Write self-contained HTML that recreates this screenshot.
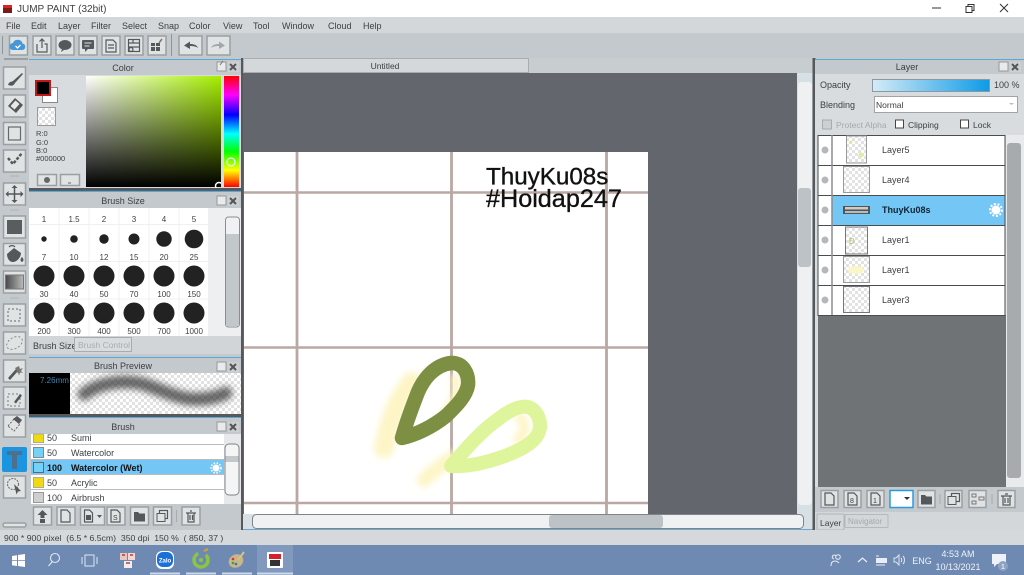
<!DOCTYPE html>
<html><head><meta charset="utf-8"><title>JUMP PAINT</title>
<style>html,body{margin:0;padding:0;background:#d3d7d9;overflow:hidden}svg{display:block;filter:blur(.3px)}
text{font-family:"Liberation Sans",sans-serif;font-size:9px;fill:#3c3f42}
.b{fill:#e0e3e4;stroke:#9b9fa2;stroke-width:1.5}
.d{fill:#55585b}.l{stroke:#55585b;fill:none;stroke-width:1.2}
.c{text-anchor:middle}.s{font-size:8px}</style></head><body>
<svg width="1024" height="575" viewBox="0 0 1024 575" xmlns="http://www.w3.org/2000/svg">
<defs>
<pattern id="ch" width="8" height="8" patternUnits="userSpaceOnUse"><rect width="8" height="8" fill="#fff"/><rect width="4" height="4" fill="#e6e6e6"/><rect x="4" y="4" width="4" height="4" fill="#e6e6e6"/></pattern>
<pattern id="ch2" width="6" height="6" patternUnits="userSpaceOnUse"><rect width="6" height="6" fill="#fff"/><rect width="3" height="3" fill="#e2e2e2"/><rect x="3" y="3" width="3" height="3" fill="#e2e2e2"/></pattern>
<linearGradient id="gh"><stop offset="0" stop-color="#fff"/><stop offset="1" stop-color="#a6ee00"/></linearGradient>
<linearGradient id="gv" x2="0" y2="1"><stop offset="0" stop-color="#000" stop-opacity="0"/><stop offset="1" stop-color="#000"/></linearGradient>
<linearGradient id="hue" x2="0" y2="1"><stop offset="0" stop-color="#f00"/><stop offset=".17" stop-color="#f0f"/><stop offset=".35" stop-color="#00f"/><stop offset=".52" stop-color="#0ff"/><stop offset=".68" stop-color="#0f0"/><stop offset=".85" stop-color="#ff0"/><stop offset="1" stop-color="#f00"/></linearGradient>
<linearGradient id="op"><stop offset="0" stop-color="#d5ebf7"/><stop offset="1" stop-color="#0d9be6"/></linearGradient>
<linearGradient id="gr"><stop offset="0" stop-color="#4a4a4a"/><stop offset="1" stop-color="#bbb"/></linearGradient>
<filter id="bl" filterUnits="userSpaceOnUse" x="340" y="340" width="240" height="170"><feGaussianBlur stdDeviation="3.500"/></filter>
<filter id="bs" filterUnits="userSpaceOnUse" x="60" y="360" width="200" height="60"><feGaussianBlur stdDeviation="3.500"/></filter>
</defs>

<!-- base -->
<rect width="1024" height="575" fill="#c3c9cd"/>
<rect width="1024" height="17" fill="#fff"/>
<rect y="17" width="1024" height="16" fill="#d3d7d9"/>
<rect y="33" width="1024" height="25" fill="#c3c9cd"/>
<rect x="3" y="5" width="9" height="8" fill="#7a1a1a"/><rect x="3" y="5" width="9" height="3" fill="#d22"/>
<text x="17" y="12" style="font-size:10px" fill="#222">JUMP PAINT (32bit)</text>
<path d="M932 8h9" stroke="#333"/><path d="M966 6.500h6v6h-6zM968 6.500v-2h6v6h-2" fill="none" stroke="#333"/><path d="M1000 4l8 8M1008 4l-8 8" stroke="#333"/>

<g style="fill:#444">
<text x="6" y="29">File</text><text x="31" y="29">Edit</text><text x="58" y="29">Layer</text><text x="91" y="29">Filter</text><text x="122" y="29">Select</text><text x="158" y="29">Snap</text><text x="189" y="29">Color</text><text x="223" y="29">View</text><text x="253" y="29">Tool</text><text x="282" y="29">Window</text><text x="328" y="29">Cloud</text><text x="363" y="29">Help</text>
</g>

<!-- top toolbar -->
<path d="M2.500 36v18" stroke="#8f9498"/>
<rect class="b" x="9.500" y="36" width="18" height="19"/>
<rect class="b" x="33" y="36" width="18" height="19"/>
<rect class="b" x="56" y="36" width="18" height="19"/>
<rect class="b" x="79" y="36" width="18" height="19"/>
<rect class="b" x="102" y="36" width="18" height="19"/>
<rect class="b" x="125" y="36" width="18" height="19"/>
<rect class="b" x="148" y="36" width="18" height="19"/>
<path d="M171.500 34v22" stroke="#8f9498"/>
<rect class="b" x="179" y="36" width="23" height="19"/>
<rect class="b" x="207" y="36" width="23" height="19"/>
<path d="M13 50a3.500 3.500 0 0 1 0-7 5 5 0 0 1 9.500 0.500 3.300 3.300 0 0 1 0 6.500z" fill="#4a97d8"/><path d="M15.500 46l2 2 3-3" stroke="#fff" fill="none" stroke-width="1.300"/>
<path d="M37 44v8h10v-8h-2.500M42 48v-9M39.500 41.500l2.500-2.500 2.500 2.500" class="l"/>
<ellipse cx="65" cy="45" rx="6.500" ry="5" class="d"/><path d="M62 49l-1 3 3-2z" class="d"/>
<rect x="82" y="40" width="12" height="9" rx="1" class="d"/><path d="M85 49v3l3-3z" class="d"/><path d="M84.500 43h7M84.500 46h5" stroke="#e0e3e4"/>
<path d="M106 40h7l3 3v9h-10zM108 45h6M108 48h6" class="l"/>
<rect x="128.500" y="39.500" width="11" height="12" class="l"/><path d="M128.500 43h11M128.500 47h11M133 39.500v3.500" class="l"/><circle cx="131" cy="49.500" r="2" class="l"/>
<path d="M151 43h4v3h-4zM156 43h4v3h-4zM151 47h4v4h-4zM156 47h4v4h-4z" class="d"/><path d="M159 43l3-4" stroke="#777" stroke-width="1.500"/>
<path d="M184 45.500l6-4v2.500c4 0 7 1 8 4-2-1.500-4-2-8-2v3z" fill="#55585b"/>
<path d="M225 45.500l-6-4v2.500c-4 0-7 1-8 4 2-1.500 4-2 8-2v3z" fill="#a3a7aa"/>

<!-- left toolbar -->
<rect x="0" y="58" width="29" height="472" fill="#c3c9cd"/>
<path d="M4 59h24" stroke="#777"/>
<g>
<rect class="b" x="3.500" y="67" width="22" height="22"/>
<rect class="b" x="3.500" y="95" width="22" height="22"/>
<rect class="b" x="3.500" y="122.500" width="22" height="22"/>
<rect class="b" x="3.500" y="150" width="22" height="22"/>
<rect class="b" x="3.500" y="183" width="22" height="22"/>
<rect class="b" x="3.500" y="216" width="22" height="22"/>
<rect class="b" x="3.500" y="243.500" width="22" height="22"/>
<rect class="b" x="3.500" y="271" width="22" height="22"/>
<rect class="b" x="3.500" y="304" width="22" height="22"/>
<rect class="b" x="3.500" y="332" width="22" height="22"/>
<rect class="b" x="3.500" y="360" width="22" height="22"/>
<rect class="b" x="3.500" y="387" width="22" height="22"/>
<rect class="b" x="3.500" y="415" width="22" height="22"/>
<rect x="2" y="447" width="25" height="25" rx="2" fill="#1b95e0"/>
<rect class="b" x="3.500" y="476" width="22" height="22"/>
<rect class="b" x="3" y="523" width="23" height="4" rx="2"/>
</g>
<path d="M8 85c1-4 4-3 5-4l9-8 1 1-8 9c-1 1-1 4-7 2z" class="d"/>
<path d="M15 98l8 7-7 8-8-7z" class="d"/><path d="M10.500 106l5-5.500 4 3.500-5 5.500z" fill="#e8e8e8"/>
<rect x="8.500" y="127" width="12" height="13" fill="none" stroke="#66696c" stroke-width="1.200"/>
<path d="M8 158l5 6 9-11" stroke="#55585b" stroke-width="2.500" fill="none" stroke-dasharray="3 1.500"/>
<path d="M14.500 186v16M6.500 194h16" stroke="#55585b" stroke-width="1.500"/><path d="M14.500 185l-3 3h6zM14.500 203l-3-3h6zM5.500 194l3-3v6zM23.500 194l-3-3v6z" class="d"/>
<rect x="7" y="220" width="15" height="14" fill="#5a5d60"/>
<path d="M7 254l7-6 7 5c0 4-4 9-8 9s-6-4-6-8z" class="d"/><path d="M9 247a4 4 0 0 1 6 0" class="l"/><path d="M22 257c2 2 2 4 0 5-2-1-2-3 0-5z" class="d"/>
<rect x="5.500" y="275" width="18" height="14" fill="url(#gr)" stroke="#777"/>
<rect x="8" y="309" width="12" height="12" fill="none" stroke="#666" stroke-dasharray="2 2"/>
<ellipse cx="14.500" cy="343" rx="8.500" ry="5.500" fill="none" stroke="#888" stroke-dasharray="2 2" transform="rotate(-30 14.500 343)"/>
<path d="M8 378l8-9 2 2-8 9z" class="d"/><path d="M19 366l1 3 3-1-2 3 2 2-3-.5-1 3-1-3-3 .5 2-2-2-3z" fill="#777"/>
<rect x="8" y="394" width="12" height="12" fill="none" stroke="#777" stroke-dasharray="2 2"/><path d="M14 402l6-8 2 1.500-6 8z" class="d"/>
<path d="M8 426l6-7 6 5-6 7z" fill="none" stroke="#666" stroke-dasharray="2 1.500"/><path d="M13 419l4-3 5 4-3 4z" class="d"/>
<path d="M7 451h15v4h-5v14h-5v-14h-5z" fill="#4f6f8f"/>
<circle cx="13" cy="484" r="5.500" fill="none" stroke="#666" stroke-dasharray="2 1"/><path d="M14 484l7 7-3 .5-1.500 3z" class="d"/>
<path d="M10 176h9M10 210h9M10 298h9" stroke="#aeb3b6"/>

<!-- color panel -->
<rect x="29" y="59" width="212" height="131" fill="#d8dcdf"/>
<rect x="29" y="59" width="212" height="16" fill="#c3c9cd"/><path d="M29 59.500h212" stroke="#5ba7d6"/>
<text x="123" y="71" class="c">Color</text>
<rect x="217" y="62" width="9" height="9" fill="#e8eaeb" stroke="#999"/><path d="M223 61l-3 4" stroke="#777"/>
<rect x="228" y="62" width="11" height="10" fill="#ccd0d3"/><path d="M230 64l6 6M236 64l-6 6" stroke="#555" stroke-width="2"/>
<rect x="42.500" y="87.500" width="15" height="15" fill="#fff" stroke="#888"/>
<rect x="36" y="81" width="14" height="14" fill="#000" stroke="#c01818" stroke-width="2"/>
<rect x="37.500" y="107.500" width="18" height="18" fill="url(#ch2)" stroke="#999"/>
<text x="36" y="136" style="font-size:7.500px">R:0</text><text x="36" y="145" style="font-size:7.500px">G:0</text><text x="36" y="153" style="font-size:7.500px">B:0</text><text x="36" y="161" style="font-size:7.500px">#000000</text>
<rect class="b" x="37.500" y="174.500" width="19" height="11"/><circle cx="47" cy="180" r="3" fill="#666"/>
<rect class="b" x="60.500" y="174.500" width="19" height="11"/><path d="M68 183h3" stroke="#666"/>
<rect x="86" y="76" width="135" height="111" fill="url(#gh)"/><rect x="86" y="76" width="135" height="111" fill="url(#gv)"/>
<circle cx="219" cy="186" r="3.500" fill="none" stroke="#fff" stroke-width="1.500"/><rect x="221" y="76" width="20" height="112" fill="#d8dcdf"/>
<rect x="224" y="76" width="15" height="111" fill="url(#hue)"/>
<circle cx="231" cy="162" r="4" fill="none" stroke="#eef" stroke-width="1.300"/>
<rect x="29" y="188" width="212" height="4" fill="#55595c"/><path d="M29 191.500h212" stroke="#5ba7d6" stroke-width="1.200"/>

<!-- brush size panel -->
<rect x="29" y="192" width="212" height="162" fill="#c3c9cd"/>
<text x="123" y="204" class="c">Brush Size</text>
<rect x="217" y="196" width="9" height="9" fill="#e8eaeb" stroke="#999"/><rect x="228" y="196" width="11" height="10" fill="#ccd0d3"/><path d="M230 198l6 6M236 198l-6 6" stroke="#555" stroke-width="2"/>
<rect x="29" y="208" width="212" height="128" fill="#eeeff0"/>
<rect x="29" y="208" width="179" height="128" fill="#fff"/>
<path d="M29 224.500h179M29 261.500h179M29 299h179M59 208v128M89 208v128M119 208v128M149 208v128M179 208v128" stroke="#f0f0f0"/>
<text x="44" y="222" class="c s">1</text><text x="74" y="222" class="c s">1.5</text><text x="104" y="222" class="c s">2</text><text x="134" y="222" class="c s">3</text><text x="164" y="222" class="c s">4</text><text x="194" y="222" class="c s">5</text>
<text x="44" y="260" class="c s">7</text><text x="74" y="260" class="c s">10</text><text x="104" y="260" class="c s">12</text><text x="134" y="260" class="c s">15</text><text x="164" y="260" class="c s">20</text><text x="194" y="260" class="c s">25</text>
<text x="44" y="297" class="c s">30</text><text x="74" y="297" class="c s">40</text><text x="104" y="297" class="c s">50</text><text x="134" y="297" class="c s">70</text><text x="164" y="297" class="c s">100</text><text x="194" y="297" class="c s">150</text>
<text x="44" y="334" class="c s">200</text><text x="74" y="334" class="c s">300</text><text x="104" y="334" class="c s">400</text><text x="134" y="334" class="c s">500</text><text x="164" y="334" class="c s">700</text><text x="194" y="334" class="c s">1000</text>
<g fill="#222">
<circle cx="44" cy="239" r="2.700"/><circle cx="74" cy="239" r="3.800"/><circle cx="104" cy="239" r="4.700"/><circle cx="134" cy="239" r="5.500"/><circle cx="164" cy="239" r="7.700"/><circle cx="194" cy="239" r="9.300"/>
<circle cx="44" cy="276" r="10.500"/><circle cx="74" cy="276" r="10.500"/><circle cx="104" cy="276" r="10.500"/><circle cx="134" cy="276" r="10.500"/><circle cx="164" cy="276" r="10.500"/><circle cx="194" cy="276" r="10.500"/>
<circle cx="44" cy="313" r="10.500"/><circle cx="74" cy="313" r="10.500"/><circle cx="104" cy="313" r="10.500"/><circle cx="134" cy="313" r="10.500"/><circle cx="164" cy="313" r="10.500"/><circle cx="194" cy="313" r="10.500"/>
</g>
<rect x="225.500" y="217" width="14" height="110" rx="3" fill="#f0f1f2" stroke="#8a8e91"/>
<rect x="226" y="234" width="13" height="92" fill="#c2c7ca"/>
<rect x="29" y="336" width="212" height="18" fill="#d1d5d7"/>
<text x="33" y="349" style="font-size:9px">Brush Size</text>
<rect x="74.500" y="337.500" width="57" height="14" fill="#d8dcde" stroke="#a8acaf"/>
<text x="78" y="348" style="font-size:8.500px;fill:#a9adb0">Brush Control</text>
<rect x="29" y="354" width="212" height="3" fill="#c3c9cd"/><path d="M29 357.500h212" stroke="#5ba7d6"/>

<!-- brush preview -->
<text x="123" y="369" class="c">Brush Preview</text>
<rect x="217" y="362" width="9" height="9" fill="#e8eaeb" stroke="#999"/><rect x="228" y="362" width="11" height="10" fill="#ccd0d3"/><path d="M230 364l6 6M236 364l-6 6" stroke="#555" stroke-width="2"/>
<rect x="29" y="373" width="212" height="41" fill="url(#ch2)"/>
<path d="M84 394C98 384 120 379 143 384C165 391 180 400 198 399C212 399 220 396 226 393" stroke="#303030" stroke-width="13" stroke-linecap="round" fill="none" filter="url(#bs)" opacity=".72"/>
<rect x="29" y="373" width="41" height="41" fill="#000"/>
<text x="40" y="383" style="font-size:8px;fill:#3d86b6">7.26mm</text>
<rect x="29" y="414" width="212" height="3" fill="#55595c"/><path d="M29 417.500h212" stroke="#5ba7d6"/>

<!-- brush list -->
<text x="123" y="430" class="c">Brush</text>
<rect x="217" y="422" width="9" height="9" fill="#e8eaeb" stroke="#999"/><rect x="228" y="422" width="11" height="10" fill="#ccd0d3"/><path d="M230 424l6 6M236 424l-6 6" stroke="#555" stroke-width="2"/>
<rect x="31" y="434" width="193" height="70" fill="#fff"/>
<rect x="31" y="460" width="193" height="15" fill="#74c6f5"/>
<path d="M31 444.500h193M31 459.500h193M31 474.500h193M31 489.500h193" stroke="#b8bcbf"/>
<rect x="33.500" y="434" width="10" height="8.500" fill="#f0d812" stroke="#aaa"/>
<rect x="33.500" y="447.500" width="10" height="10" fill="#74d2f8" stroke="#888"/>
<rect x="33.500" y="462.500" width="10" height="10" fill="#74d2f8" stroke="#666"/>
<rect x="33.500" y="477.500" width="10" height="10" fill="#f0d812" stroke="#aaa"/>
<rect x="33.500" y="492.500" width="10" height="10" fill="#cfcfcf" stroke="#999"/>
<text x="47" y="441">50</text><text x="71" y="441">Sumi</text>
<text x="47" y="456">50</text><text x="71" y="456">Watercolor</text>
<text x="47" y="471" style="font-weight:bold;fill:#111">100</text><text x="71" y="471" style="font-weight:bold;fill:#111">Watercolor (Wet)</text>
<text x="47" y="486">50</text><text x="71" y="486">Acrylic</text>
<text x="47" y="501">100</text><text x="71" y="501">Airbrush</text>
<circle cx="216" cy="468" r="3.500" fill="#fff"/><circle cx="216" cy="468" r="5" fill="none" stroke="#fff" stroke-width="1.500" stroke-dasharray="1.500 1.500"/>
<rect x="224" y="434" width="17" height="70" fill="#e6e8e9"/>
<rect x="225" y="444" width="14" height="51" rx="4" fill="#f4f5f5" stroke="#808487"/>
<rect x="225.500" y="456" width="13" height="6" fill="#c4c8cb"/>
<rect x="29" y="504" width="212" height="26" fill="#c3c9cd"/>
<rect class="b" x="33.500" y="507" width="18" height="18"/><rect class="b" x="57" y="507" width="18" height="18"/><rect class="b" x="80.500" y="507" width="24" height="18"/><rect class="b" x="107" y="507" width="18" height="18"/><rect class="b" x="130.500" y="507" width="18" height="18"/><rect class="b" x="153.500" y="507" width="18" height="18"/><rect class="b" x="182" y="507" width="18" height="18"/>
<path d="M176.500 510v12" stroke="#aaa"/>
<path d="M37.500 515l5-5 5 5h-3v3h-4v-3zM40 519h5v4h-5z" class="d"/>
<path d="M61 510h6l3 3v9h-9z" class="l"/>
<path d="M84.500 510h5l3 3v9h-8z" class="l"/><rect x="86" y="515" width="5" height="5" class="d"/><path d="M97 515h5l-2.500 3z" class="d"/>
<path d="M111 510h6l3 3v9h-9z" class="l"/><text x="113" y="520" style="font-size:7px">S</text>
<path d="M134 512h4l1.500 1.500h5.500v8h-11z" class="d"/>
<rect x="159.500" y="510.500" width="8" height="8" class="l"/><rect x="157" y="513.500" width="8" height="8" fill="#e0e3e4" stroke="#55585b"/>
<path d="M186 513h10M188 513v9h6v-9M190 511h2M190 515v5M192.500 515v5" class="l"/>
<rect x="241" y="58" width="2.500" height="472" fill="#55595c"/>

<!-- center -->
<rect x="243" y="58" width="571" height="15" fill="#c8cdd0"/>
<rect x="243.500" y="58.500" width="285" height="14" fill="#d4d8da" stroke="#a9adb0"/>
<text x="385" y="69" class="c" style="font-size:8.500px">Untitled</text>
<rect x="243" y="73" width="571" height="442" fill="#63676d"/>
<rect x="244" y="152" width="404" height="363" fill="#fff"/>
<g stroke="#b9a8a3" stroke-width="2.800">
<path d="M297 152v363M451.500 152v363M606.500 152v363"/>
<path d="M244 192.500h404M244 347.500h404M244 503h404" stroke-width="2.500"/>
</g>
<text x="486" y="184.500" style="font-size:24.200px;fill:#111;stroke:#111;stroke-width:.35px">ThuyKu08s</text>
<text x="486" y="207" style="font-size:25.200px;fill:#111;stroke:#111;stroke-width:.35px">#Hoidap247</text>
<!-- leaves -->
<path d="M384 448C389 425 395 402 412 382" stroke="#fdf5c6" stroke-width="20" stroke-linecap="round" fill="none" filter="url(#bl)"/>
<path d="M424 480C432 472 440 466 452 458" stroke="#fdf5c6" stroke-width="14" stroke-linecap="round" fill="none" filter="url(#bl)"/>
<path d="M455 378C459 390 454 402 446 412" stroke="#fdf5c6" stroke-width="9" stroke-linecap="round" fill="none" filter="url(#bl)"/>
<path d="M520 418C527 425 526 432 518 440" stroke="#fdf5c6" stroke-width="10" stroke-linecap="round" fill="none" filter="url(#bl)"/>
<path d="M451 466C465 450 480 432 497 420C508 411 520 405 528 407C538 410 543 424 538 434C533 444 518 451 505 456C488 462 470 467 451 466Z" fill="none" stroke="#dff59b" stroke-width="14" stroke-linejoin="round"/>
<path d="M402 438C407 420 413 405 418 392C424 378 435 365 451 363C463 362 469 374 468 385C466 397 455 407 446 416C432 427 418 434 402 438Z" fill="none" stroke="#7c8f43" stroke-width="14.500" stroke-linejoin="round"/>

<!-- scrollbars -->
<rect x="797" y="73" width="17" height="442" fill="#d7e0e5"/>
<rect x="798" y="82" width="14" height="423" rx="3" fill="#eef0f1"/>
<rect x="798" y="188" width="13" height="79" rx="3" fill="#bcc2c6"/>
<rect x="243" y="514" width="571" height="16" fill="#d7e0e5"/>
<rect x="252.500" y="514.500" width="551" height="14" rx="4" fill="#f0f1f2" stroke="#808487"/>
<rect x="549" y="515" width="114" height="13" rx="3" fill="#bcc2c6"/>
<rect x="243" y="529" width="571" height="1" fill="#6aa9d4"/>
<rect x="812.500" y="58" width="3" height="472" fill="#55595c"/>

<!-- right panel -->
<rect x="815" y="59" width="209" height="471" fill="#d8dcdf"/>
<rect x="815" y="59" width="209" height="15" fill="#c3c9cd"/><path d="M815 59.500h209" stroke="#5ba7d6"/>
<text x="907" y="70" class="c">Layer</text>
<rect x="999" y="62" width="9" height="9" fill="#e8eaeb" stroke="#999"/><rect x="1010" y="62" width="11" height="10" fill="#ccd0d3"/><path d="M1012 64l6 6M1018 64l-6 6" stroke="#555" stroke-width="2"/>
<text x="820" y="88">Opacity</text>
<rect x="872.500" y="79.500" width="117" height="12" fill="url(#op)" stroke="#8a9aa5"/>
<text x="994" y="88">100 %</text>
<text x="820" y="108">Blending</text>
<rect x="874.500" y="96.500" width="143" height="16" fill="#fff" stroke="#a0a4a7"/>
<text x="876" y="108" style="font-size:8.500px">Normal</text><path d="M1009 103h5l-2.500 2z" fill="#bbb"/>
<rect x="822.500" y="120" width="9" height="9" fill="#ccd0d2" stroke="#a8acaf"/><text x="836" y="128" style="fill:#a5a9ac;font-size:8.500px">Protect Alpha</text>
<rect x="895.500" y="120" width="8" height="8" fill="#fff" stroke="#444"/><text x="908" y="128" style="font-size:8.500px">Clipping</text>
<rect x="960.500" y="120" width="8" height="8" fill="#fff" stroke="#444"/><text x="973" y="128" style="font-size:8.500px">Lock</text>
<rect x="818" y="315" width="188" height="172" fill="#707376"/>
<rect x="818" y="135.500" width="187" height="180" fill="#fff"/>
<rect x="832" y="195" width="173" height="30" fill="#74c6f5"/>
<path d="M818 135.500h187v180h-187zM818 165.500h187M818 195.500h187M818 225.500h187M818 255.500h187M818 285.500h187" fill="none" stroke="#4a4d50"/>
<path d="M832 135v180" stroke="#8a8e91" stroke-width="1.500"/>
<g fill="#b5b8ba"><circle cx="825" cy="150" r="3.500"/><circle cx="825" cy="180" r="3.500"/><circle cx="825" cy="210" r="3.500"/><circle cx="825" cy="240" r="3.500"/><circle cx="825" cy="270" r="3.500"/><circle cx="825" cy="300" r="3.500"/></g>
<rect x="846.500" y="136" width="20" height="27" fill="url(#ch2)" stroke="#9a9a9a"/>
<rect x="843.500" y="166.500" width="26" height="26" fill="url(#ch2)" stroke="#9a9a9a"/>
<rect x="843" y="206" width="27" height="8" fill="#555"/><rect x="845" y="207" width="23" height="2.500" fill="#ccc"/><rect x="845" y="211" width="23" height="2" fill="#bbb"/>
<rect x="845.500" y="227" width="22" height="27" fill="url(#ch2)" stroke="#777"/>
<text x="849" y="244" style="font-size:8px;fill:#a8c060">Đ</text>
<rect x="843.500" y="256.500" width="26" height="26" fill="url(#ch2)" stroke="#9a9a9a"/><ellipse cx="856" cy="270" rx="8" ry="4" fill="#fbf6c8"/>
<rect x="843.500" y="286.500" width="26" height="26" fill="url(#ch2)" stroke="#777"/>
<circle cx="851" cy="142" r="1.500" fill="#e6e69a"/><circle cx="861" cy="155" r="2.500" fill="#dfeea0"/>
<text x="882" y="153">Layer5</text><text x="882" y="183">Layer4</text>
<text x="882" y="213" style="font-weight:bold;fill:#123">ThuyKu08s</text>
<text x="882" y="243">Layer1</text><text x="882" y="273">Layer1</text><text x="882" y="303">Layer3</text>
<circle cx="996" cy="210" r="4.500" fill="#fff"/><circle cx="996" cy="210" r="6" fill="none" stroke="#fff" stroke-width="2" stroke-dasharray="2 1.700"/>
<rect x="1006" y="135" width="18" height="352" fill="#e8eaeb"/>
<rect x="1007" y="143" width="14" height="335" rx="3" fill="#a7abae"/>
<rect x="815" y="487" width="209" height="25" fill="#c3c9cd"/>
<rect class="b" x="821" y="490.500" width="17" height="17"/><rect class="b" x="844" y="490.500" width="17" height="17"/><rect class="b" x="867" y="490.500" width="17" height="17"/>
<rect x="890" y="490.500" width="23" height="17" fill="#fff" stroke="#2a9ae0" stroke-width="1.500"/><path d="M904 497h6l-3 3z" fill="#333"/>
<rect class="b" x="918" y="490.500" width="17" height="17"/><rect class="b" x="945" y="490.500" width="17" height="17"/><rect class="b" x="969" y="490.500" width="17" height="17"/><rect class="b" x="998" y="490.500" width="17" height="17"/>
<path d="M940 494v10M992 494v10" stroke="#aaa"/>
<path d="M825 493h6l3 3v9h-9z" class="l"/>
<path d="M848 493h6l3 3v9h-9z" class="l"/><text x="850" y="503" style="font-size:7px">8</text>
<path d="M871 493h6l3 3v9h-9z" class="l"/><text x="873" y="503" style="font-size:7px">1</text>
<path d="M921 495h4l1.500 1.500h5.500v8h-11z" class="d"/>
<rect x="951.500" y="493.500" width="8" height="8" class="l"/><rect x="948" y="496.500" width="8" height="8" fill="#e0e3e4" stroke="#55585b"/>
<path d="M972 494h4v3h-4zM972 501h4v3h-4zM979 497h5v3h-5z" fill="none" stroke="#777"/>
<path d="M1001 496h11M1003 496v9h7v-9M1005 494h3M1005 498v5M1008 498v5" class="l"/>
<rect x="815" y="512" width="209" height="18" fill="#d3d7d9"/>
<rect x="817" y="514" width="27" height="16" rx="1" fill="#d5d8da" stroke="#b0b4b7"/>
<text x="820" y="526" style="font-size:8.500px">Layer</text>
<rect x="845" y="514.500" width="43" height="13" rx="1" fill="#d3d7d9" stroke="#b5b9bc"/>
<text x="848" y="524" style="font-size:8px;fill:#a5a9ac">Navigator</text>

<!-- status -->
<rect y="530" width="1024" height="15" fill="#d5d9db"/>
<text x="4" y="541" style="font-size:8.700px">900 * 900 pixel&#160;&#160;(6.5 * 6.5cm)&#160;&#160;350 dpi&#160;&#160;150 %&#160;&#160;( 850, 37 )</text>

<!-- taskbar -->
<rect y="545" width="1024" height="30" fill="#6f8ab2"/>
<rect x="257" y="545" width="36" height="30" fill="#8199bc"/>
<path d="M150 573.500h30M186 573.500h30M222 573.500h30M257 573.500h36" stroke="#cdd8e8" stroke-width="2"/>
<path d="M12 556l5-.8v5h-5zM18 555l7-1v6.200h-7zM12 561h5v5l-5-.8zM18 561h7v6l-7-1z" fill="#fff"/>
<circle cx="55" cy="558" r="4.500" fill="none" stroke="#dfe6f0" stroke-width="1.100"/><path d="M52 562l-3.500 4" stroke="#dfe6f0" stroke-width="1.100"/>
<path d="M85 555h9v11h-9zM82 557v7M97 557v7" fill="none" stroke="#dfe6f0"/>
<rect x="120" y="553" width="7" height="7" fill="#e7c6c6"/><rect x="128" y="553" width="7" height="7" fill="#f0d8d8"/><rect x="124" y="561" width="8" height="7" fill="#eee"/><path d="M122 555h3M130 555h3M126 563h4" stroke="#c33" stroke-width="1.500"/>
<rect x="156" y="551" width="18" height="18" rx="6" fill="#fff"/><rect x="157" y="552" width="16" height="15" rx="6" fill="#1a6fd8"/>
<text x="165" y="562.500" class="c" style="font-size:6px;fill:#fff;font-weight:bold">Zalo</text>
<circle cx="201" cy="560" r="7" fill="none" stroke="#8cc63f" stroke-width="3.500" stroke-dasharray="30 8"/><circle cx="201" cy="560" r="2" fill="#8cc63f"/><path d="M204 551l4-2" stroke="#e6a020" stroke-width="2"/>
<ellipse cx="236" cy="561" rx="7.500" ry="6.500" fill="#c9b58a" transform="rotate(-30 236 561)"/><circle cx="233" cy="559" r="1.300" fill="#d33"/><circle cx="236" cy="564" r="1.300" fill="#37b"/><circle cx="233" cy="563" r="1.300" fill="#3a3"/><path d="M238 560l6-8" stroke="#ddc080" stroke-width="2"/>
<rect x="267" y="552" width="16" height="16" rx="1" fill="#fff"/><rect x="269" y="554" width="12" height="5" fill="#d2232a"/><rect x="270" y="560" width="10" height="6" fill="#333"/>
<circle cx="838" cy="557" r="2.300" fill="none" stroke="#e8eef6"/><path d="M831 566c0-4 2-5 4-5s3 1 4 2M836 556a2 2 0 1 0-2 3" fill="none" stroke="#e8eef6"/>
<path d="M858 562l4.500-4 4.500 4" fill="none" stroke="#e8eef6" stroke-width="1.200"/>
<rect x="876" y="558" width="11" height="5" fill="#e8eef6"/><path d="M876 556h3M876 565h9" stroke="#e8eef6"/>
<path d="M894 558h2l3-3v10l-3-3h-2z" fill="none" stroke="#dfe6f0"/><path d="M901 558c1 1 1 3 0 4M903 556c2 2 2 6 0 8" fill="none" stroke="#dfe6f0"/>
<text x="922" y="564" class="c" style="fill:#eef2f8;font-size:9px">ENG</text>
<text x="958" y="557" class="c" style="fill:#eef2f8;font-size:9px">4:53 AM</text>
<text x="958" y="570" class="c" style="fill:#eef2f8;font-size:9px">10/13/2021</text>
<path d="M992 554h14v10h-9l-3 3v-3h-2z" fill="#eef2f8"/><circle cx="1003" cy="566" r="5" fill="#8ea3c4"/><text x="1003" y="569" class="c" style="font-size:7.500px;fill:#fff">1</text>
</svg>
</body></html>
